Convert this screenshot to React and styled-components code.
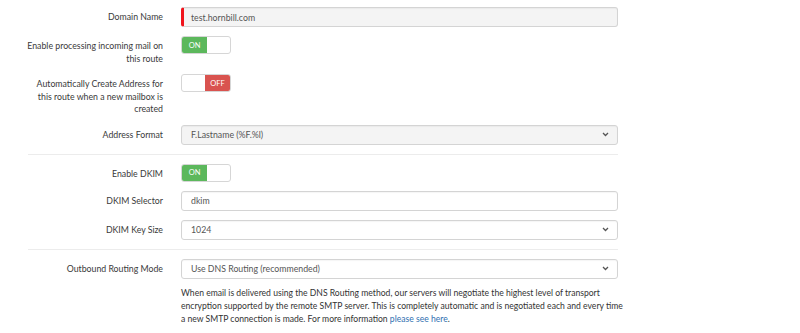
import React from "react";
import styled, { createGlobalStyle } from "styled-components";

const GlobalStyle = createGlobalStyle`
  html, body {
    margin: 0;
    padding: 0;
    background: #fff;
  }
  body {
    font-family: Lato, "Open Sans", sans-serif;
    font-size: 8.75px;
    color: #333;
  }
`;

const Form = styled.div`
  width: 595px;
  padding: 7px 0 0 23px;
`;

const Row = styled.div`
  display: grid;
  grid-template-columns: 140px 437px;
  column-gap: 18px;
  margin-bottom: 9px;
`;

const Label = styled.div`
  text-align: right;
  line-height: 12.5px;
  padding-top: 4px;
  color: #3a3a3a;
`;

const Control = styled.div`
  display: flex;
  flex-direction: column;
`;

const TextBox = styled.div`
  height: 20px;
  box-sizing: border-box;
  border: 1px solid #d4d4d4;
  border-left: ${(props) => (props.required ? "3px solid #f0141c" : "1px solid #d4d4d4")};
  border-radius: 3px;
  background: ${(props) => (props.muted ? "#f4f4f4" : "#fff")};
  display: flex;
  align-items: center;
  justify-content: space-between;
  padding: 0 8px 0 ${(props) => (props.required ? "7px" : "9px")};
  color: #555;
  box-shadow: inset 0 1px 1px rgba(0, 0, 0, 0.04);
`;

const Chevron = () => (
  <svg width="7" height="5" viewBox="0 0 7 5">
    <path d="M1 1 L3.5 3.5 L6 1" fill="none" stroke="#555" strokeWidth="1.3" />
  </svg>
);

const Toggle = styled.div`
  width: 50px;
  height: 18px;
  box-sizing: border-box;
  border: 1px solid #d6d6d6;
  border-radius: 3px;
  display: flex;
  overflow: hidden;
  flex-direction: ${(props) => (props.on ? "row" : "row-reverse")};
`;

const ToggleFace = styled.div`
  width: 25px;
  background: ${(props) => (props.on ? "#5cb85c" : "#d9534f")};
  color: #fff;
  font-size: 7.5px;
  display: flex;
  align-items: center;
  justify-content: center;
`;

const Separator = styled.div`
  height: 1px;
  background: #ececec;
  margin: 0 0 9px 5px;
`;

const Help = styled.p`
  margin: 8px 0 0;
  font-size: 8.6px;
  line-height: 13px;
  color: #333;
  white-space: nowrap;
`;

const Link = styled.a`
  color: #2f6fb1;
  text-decoration: none;
`;

const Switch = ({ on }) => (
  <Toggle on={on}>
    <ToggleFace on={on}>{on ? "ON" : "OFF"}</ToggleFace>
  </Toggle>
);

export default function App() {
  return (
    <>
      <GlobalStyle />
      <Form>
        <Row>
          <Label>Domain Name</Label>
          <Control>
            <TextBox required muted>test.hornbill.com</TextBox>
          </Control>
        </Row>
        <Row>
          <Label>Enable processing incoming mail on this route</Label>
          <Control>
            <Switch on />
          </Control>
        </Row>
        <Row>
          <Label>Automatically Create Address for this route when a new mailbox is created</Label>
          <Control>
            <Switch />
          </Control>
        </Row>
        <Row>
          <Label>Address Format</Label>
          <Control>
            <TextBox muted>
              F.Lastname (%F.%l)
              <Chevron />
            </TextBox>
          </Control>
        </Row>
        <Separator />
        <Row>
          <Label>Enable DKIM</Label>
          <Control>
            <Switch on />
          </Control>
        </Row>
        <Row>
          <Label>DKIM Selector</Label>
          <Control>
            <TextBox>dkim</TextBox>
          </Control>
        </Row>
        <Row>
          <Label>DKIM Key Size</Label>
          <Control>
            <TextBox>
              1024
              <Chevron />
            </TextBox>
          </Control>
        </Row>
        <Separator />
        <Row>
          <Label>Outbound Routing Mode</Label>
          <Control>
            <TextBox>
              Use DNS Routing (recommended)
              <Chevron />
            </TextBox>
            <Help>
              When email is delivered using the DNS Routing method, our servers will negotiate the highest level of transport
              <br />
              encryption supported by the remote SMTP server. This is completely automatic and is negotiated each and every time
              <br />
              a new SMTP connection is made. For more information <Link href="#">please see here</Link>.
            </Help>
          </Control>
        </Row>
      </Form>
    </>
  );
}
